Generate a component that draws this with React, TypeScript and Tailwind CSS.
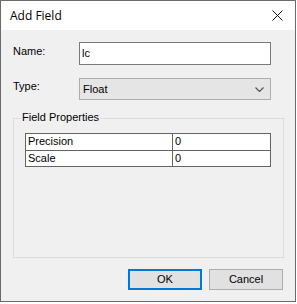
const rows = [
  { name: "Precision", value: "0" },
  { name: "Scale", value: "0" },
];

function CloseIcon() {
  return (
    <svg width="11" height="11" viewBox="0 0 11 11" className="block">
      <path d="M0.5 0.5 L10.5 10.5 M10.5 0.5 L0.5 10.5" stroke="#111" strokeWidth="1" fill="none" />
    </svg>
  );
}

function Chevron() {
  return (
    <svg width="9" height="5" viewBox="0 0 9 5" className="block">
      <path d="M0.5 0.5 L4.5 4.5 L8.5 0.5" stroke="#555" strokeWidth="1.2" fill="none" />
    </svg>
  );
}

export default function App() {
  return (
    <div className="w-[297px] h-[304px] bg-white">
      <div
        className="w-[296px] h-[302px] border border-[#6b6b6b] bg-[#f0f0f0] flex flex-col text-[11px] text-black"
        style={{ fontFamily: '"Liberation Sans", Arial, sans-serif' }}
      >
        {/* Title bar */}
        <div className="h-[29px] bg-white flex items-center justify-between pl-[9px] pr-[12px] shrink-0">
          <span
            className="text-[12px] leading-none pt-[1px]"
            style={{ fontFamily: '"Open Sans", "Noto Sans", sans-serif' }}
          >
            Add Field
          </span>
          <CloseIcon />
        </div>

        {/* Name */}
        <div className="flex mt-[12px] pl-[12px]">
          <span className="w-[66px] pt-[3px] leading-[13px]">Name:</span>
          <div className="w-[192px] h-[23px] bg-white border border-[#7a7a7a] flex items-center pl-[2px]">
            lc
          </div>
        </div>

        {/* Type */}
        <div className="flex mt-[13px] pl-[12px]">
          <span className="w-[66px] pt-[2px] leading-[13px]">Type:</span>
          <div className="w-[192px] h-[22px] bg-[#e5e5e5] border border-[#adadad] flex items-center justify-between pl-[3px] pr-[6px]">
            <span className="pt-[1px]">Float</span>
            <Chevron />
          </div>
        </div>

        {/* Field Properties group */}
        <div className="relative mt-[18px] ml-[12px] w-[271px] h-[140px] border border-[#dcdcdc] shrink-0">
          <span className="absolute -top-[8px] left-[7px] bg-[#f0f0f0] px-[1px] leading-[13px]">
            Field Properties
          </span>
          <div className="mt-[14px] ml-[11px] w-[246px] border border-[#646464] bg-white">
            {rows.map((row, i) => (
              <div
                key={row.name}
                className={`flex h-[16px] ${i > 0 ? "border-t border-[#646464]" : ""}`}
              >
                <span className="w-[147px] border-r border-[#646464] pl-[2px] leading-[15px]">
                  {row.name}
                </span>
                <span className="pl-[2px] leading-[15px]">{row.value}</span>
              </div>
            ))}
          </div>
        </div>

        {/* Buttons */}
        <div className="flex justify-end gap-[7px] mt-[11px] pr-[12px]">
          <button className="w-[74px] h-[21px] bg-[#e1e1e1] border-2 border-[#0078d7] leading-none">
            OK
          </button>
          <button className="w-[74px] h-[21px] bg-[#e1e1e1] border border-[#adadad] leading-none">
            Cancel
          </button>
        </div>
      </div>
    </div>
  );
}
